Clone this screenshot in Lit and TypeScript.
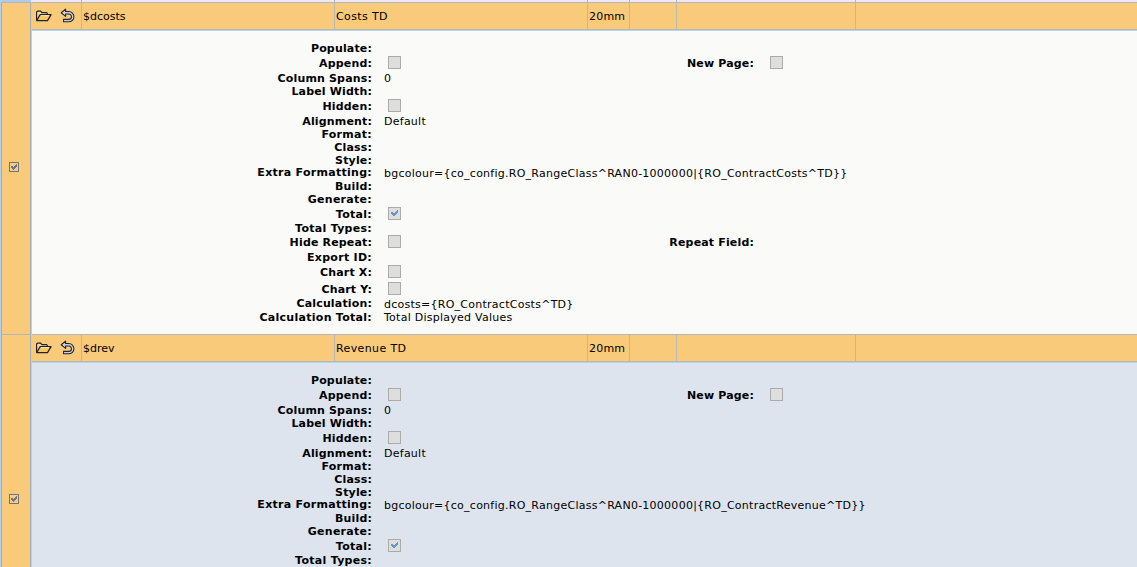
import { LitElement, html, css, svg, nothing } from "lit";
import { customElement, property } from "lit/decorators.js";

interface Field {
  label: string;
  h: number;
  wide?: boolean;
  value?: string;
  drop?: boolean;
  check?: boolean;
  clip?: boolean;
  second?: { label: string; check?: boolean };
}

const fields = (name: string, ref: string): Field[] => [
  { label: "Populate:", h: 15 },
  { label: "Append:", h: 15, check: false, second: { label: "New Page:", check: false } },
  { label: "Column Spans:", h: 13, value: "0" },
  { label: "Label Width:", h: 15 },
  { label: "Hidden:", h: 15, check: false },
  { label: "Alignment:", h: 13, value: "Default" },
  { label: "Format:", h: 13, wide: true },
  { label: "Class:", h: 13 },
  { label: "Style:", h: 12 },
  { label: "Extra Formatting:", h: 14, wide: true, drop: true, value: `bgcolour={co_config.RO_RangeClass^RAN0-1000000|{${ref}^TD}}` },
  { label: "Build:", h: 13 },
  { label: "Generate:", h: 15, wide: true },
  { label: "Total:", h: 14, wide: true, check: true },
  { label: "Total Types:", h: 14, wide: true, clip: true },
  { label: "Hide Repeat:", h: 15, check: false, second: { label: "Repeat Field:" } },
  { label: "Export ID:", h: 15, wide: true },
  { label: "Chart X:", h: 17, check: false },
  { label: "Chart Y:", h: 14, check: false },
  { label: "Calculation:", h: 14, drop: true, value: `${name}={${ref}^TD}` },
  { label: "Calculation Total:", h: 13, wide: true, value: "Total Displayed Values" },
];

@customElement("report-column")
export class ReportColumn extends LitElement {
  @property() name = "";
  @property() heading = "";
  @property() source = "";
  @property({ type: Boolean }) alt = false;

  static styles = css`
    :host { display: grid; grid-template-columns: 31px 1fr; height: 332px; box-sizing: border-box; }
    .side { background: #f9ca7a; border-top: 1px solid #b5b6bb; border-right: 1px solid #a9b0b9; box-sizing: border-box;
      border-left: 1px solid #a9adb3; display: flex; align-items: center; justify-content: center; margin-left: 1px; }
    .side svg { display: block; margin: 0 5px 4px 0; }
    .main { display: flex; flex-direction: column; min-width: 0; border-left: 1px solid #b4d0e9; }
    .head { display: grid; grid-template-columns: 50px 253px 253px 42px 47px 179px 1fr; height: 28px; flex: none;
      box-sizing: border-box; background: #f9ca7a; border-top: 1px solid #b5b6bb; border-bottom: 1px solid #b8b7b0; }
    .cell { border-right: 1px solid #b9b8b2; box-sizing: border-box; padding: 7px 0 0 1px; line-height: 13px; white-space: nowrap; }
    .cell:last-child { border-right: 0; }
    .heading { letter-spacing: .38px; }
    .size { letter-spacing: .2px; }
    .icons { display: flex; gap: 8px; padding: 5px 0 0 3px; }
    .icons svg { display: block; flex: none; }
    .body { flex: 1; background: #fafaf8; border-top: 1px solid #b4d3ee; padding-top: 11px; }
    :host([alt]) .body { background: #dde4ee; }
    .row { display: grid; grid-template-columns: 340px 12px 285px 85px 16px 1fr; line-height: 13px; white-space: nowrap; }
    .label { font-weight: bold; text-align: right; height: 13px; letter-spacing: .16px; }
    .wide { letter-spacing: .28px; }
    .value { grid-column: 3; height: 13px; letter-spacing: .255px; }
    .clip { height: 12px; overflow: hidden; }
    .drop { padding-top: 1px; }
    .l2 { grid-column: 4; }
    .c2 { grid-column: 6; }
    .box { display: block; margin: -1px 0 0 4px; }
    .c2 .box { margin-left: 0; }
  `;

  private box(checked: boolean) {
    return html`<svg class="box" width="13" height="13" shape-rendering="crispEdges">
      <rect x=".5" y=".5" width="12" height="12" fill="#dedede" stroke="#ababab" />
      ${checked ? svg`<path fill="#6596cb" d="M3 5h1v2h-1zM4 5h1v3h-1zM5 6h1v3h-1zM6 6h1v3h-1zM7 5h1v3h-1zM8 4h1v3h-1zM9 3h1v3h-1z"/>` : nothing}
    </svg>`;
  }

  render() {
    return html`
      <div class="side">
        <svg width="10" height="10" viewBox="0 0 10 10" shape-rendering="crispEdges">
          <rect x=".5" y=".5" width="9" height="9" fill="#f5cd88" stroke="#74747c" />
          <path fill="#74747c" d="M2 4h1v2h-1zM3 4h1v3h-1zM4 5h1v3h-1zM5 4h1v3h-1zM6 3h1v3h-1zM7 2h1v3h-1z" />
        </svg>
      </div>
      <div class="main">
        <div class="head">
          <div class="cell icons">
            <svg width="17" height="16" viewBox="0 0 17 16">
              <path d="M1.6 12.6v-8.5l1-1h3l1.3 1.5h4.6l.8.8v1.4" fill="#f9dda8" stroke="#222" stroke-width="1.2"/>
              <path d="M1.7 12.6L5.1 6.6h11l-3.6 6z" fill="#f7c766" stroke="#222" stroke-width="1.2" stroke-linejoin="round"/>
              <path d="M6 7.7h8" stroke="#fff0bc"/>
            </svg>
            <svg width="15" height="16" viewBox="0 0 15 16">
              <path d="M4.6 4.8h4.2a3.9 3.9 0 0 1 0 7.8H3" fill="none" stroke="#22262e" stroke-width="3.5"/>
              <path d="M1.2 4.8L5.6 1.2v7.2z" fill="#d6dbe2" stroke="#22262e" stroke-width="1.1" stroke-linejoin="round"/>
              <path d="M4.4 4.8h4.4a3.9 3.9 0 0 1 0 7.8H4" fill="none" stroke="#c9cfd8" stroke-width="1.4"/>
            </svg>
          </div>
          <div class="cell">${this.name}</div>
          <div class="cell heading">${this.heading}</div>
          <div class="cell size">20mm</div>
          <div class="cell"></div><div class="cell"></div><div class="cell"></div>
        </div>
        <div class="body">
          ${fields(this.name.slice(1), this.source).map((f) => html`
            <div class="row" style="height:${f.h}px">
              <div class="label ${f.wide ? "wide" : ""} ${f.clip ? "clip" : ""}">${f.label}</div>
              <div class="value ${f.drop ? "drop" : ""}">${f.check !== undefined ? this.box(f.check) : f.value}</div>
              ${f.second ? html`<div class="label l2">${f.second.label}</div>
                <div class="c2">${f.second.check !== undefined ? this.box(f.second.check) : nothing}</div>` : nothing}
            </div>`)}
        </div>
      </div>`;
  }
}

@customElement("app-root")
export class AppRoot extends LitElement {
  static styles = css`
    :host { display: block; height: 567px; overflow: hidden; background: #b4d0ee;
      font: 11px/13px Verdana, "DejaVu Sans", sans-serif; color: #000; }
    .top { height: 2px; display: grid; grid-template-columns: 81px 253px 253px 42px 47px 179px 1fr; margin-left: 1px; }
    .top div { background: #ebe8f8; border-right: 1px solid #b5b6bb; }
    .top div:first-child { background: linear-gradient(90deg, #b0cae9 30px, #ebe8f8 30px); }
    .top div:last-child { border-right: 0; }
  `;
  render() {
    return html`
      <div class="top"><div></div><div></div><div></div><div></div><div></div><div></div><div></div></div>
      <report-column name="$dcosts" heading="Costs TD" source="RO_ContractCosts"></report-column>
      <report-column alt name="$drev" heading="Revenue TD" source="RO_ContractRevenue"></report-column>`;
  }
}
